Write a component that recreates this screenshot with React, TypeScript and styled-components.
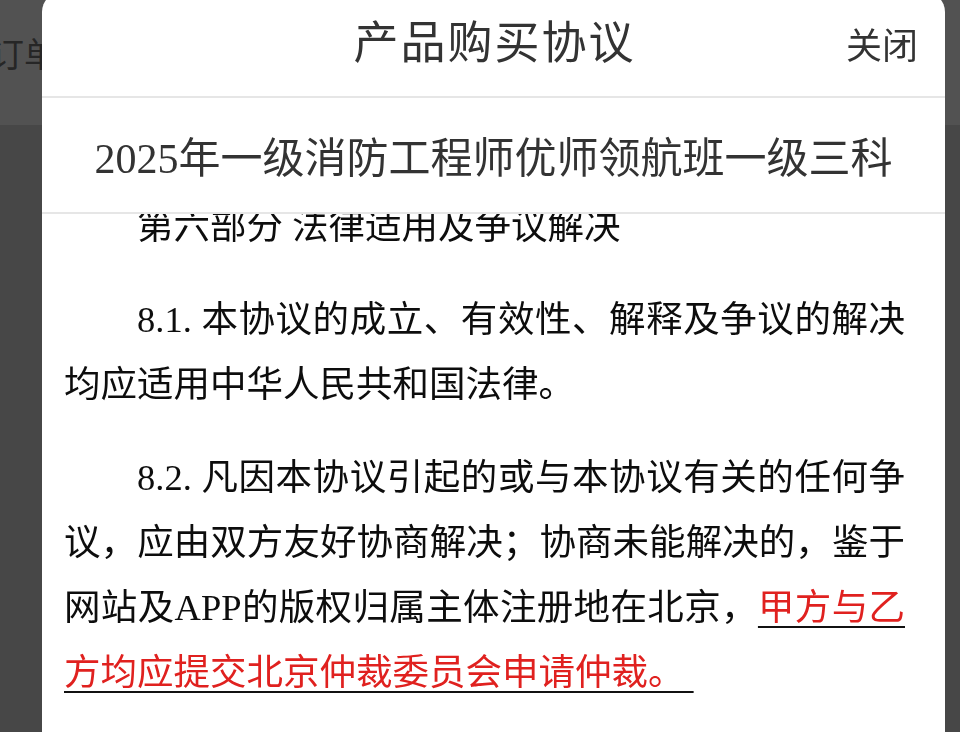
import React from "react";
import styled, { createGlobalStyle } from "styled-components";

const GlobalStyle = createGlobalStyle`
  html, body {
    margin: 0;
    padding: 0;
    height: 100%;
  }
  body {
    font-family: "Liberation Serif", "Noto Sans CJK SC", serif;
    background: #dedede;
    overflow: hidden;
  }
  #root {
    height: 100%;
  }
`;

const Page = styled.div`
  display: flex;
  flex-direction: column;
  height: 100%;
`;

const PageHeader = styled.header`
  height: 125px;
  background: #ffffff;
  display: flex;
  align-items: center;
  padding-bottom: 20px;
  box-sizing: border-box;
`;

const PageTitle = styled.h1`
  margin: 0 0 0 -10px;
  font-family: "Noto Sans CJK SC", sans-serif;
  font-weight: 400;
  font-size: 34px;
  color: #777777;
`;

const PageBody = styled.main`
  flex: 1;
  background: #dedede;
`;

const Overlay = styled.div`
  position: fixed;
  inset: 0;
  background: rgba(0, 0, 0, 0.68);
`;

const Sheet = styled.section`
  position: fixed;
  top: -8px;
  left: 42px;
  right: 15px;
  bottom: 0;
  background: #ffffff;
  border-radius: 20px 20px 0 0;
  display: flex;
  flex-direction: column;
  overflow: hidden;
`;

const SheetHeader = styled.div`
  height: 106px;
  box-sizing: border-box;
  display: grid;
  grid-template-columns: 1fr auto 1fr;
  align-items: center;
  padding: 0 27px 2px;
  border-bottom: 2px solid #e6e6e6;
`;

const SheetTitle = styled.h2`
  grid-column: 2;
  margin: 0 0 8px 2px;
  font-family: "Noto Sans CJK SC", sans-serif;
  font-weight: 400;
  font-size: 45px;
  letter-spacing: 2px;
  color: #333333;
`;

const CloseButton = styled.button`
  grid-column: 3;
  justify-self: end;
  border: 0;
  padding: 0;
  background: none;
  font-family: "Noto Sans CJK SC", sans-serif;
  font-size: 36px;
  color: #333333;
  cursor: pointer;
`;

const ProductName = styled.div`
  height: 116px;
  box-sizing: border-box;
  display: flex;
  align-items: center;
  justify-content: center;
  border-bottom: 2px solid #e6e6e6;
  font-size: 42px;
  color: #333333;
  padding-bottom: 2px;
`;

const Body = styled.div`
  flex: 1;
  overflow: hidden;
  padding: 0 40px 0 22px;
`;

const Article = styled.article`
  margin-top: -20px;
  font-size: 36.5px;
  line-height: 65px;
  color: #0d0d0d;
`;

const Clause = styled.div`
  margin-bottom: 28px;
`;

const Lines = styled.div<{ $indent?: boolean; $fill?: boolean }>`
  text-indent: ${({ $indent }) => ($indent ? "2em" : "0")};
  text-align: justify;
  text-align-last: ${({ $fill }) => ($fill ? "justify" : "left")};
`;

const Stressed = styled.span`
  color: #e0211f;
  text-decoration: underline;
  text-decoration-color: #111111;
  text-decoration-thickness: 2px;
  text-underline-offset: 6px;
`;

export default function App() {
  return (
    <>
      <GlobalStyle />
      <Page>
        <PageHeader>
          <PageTitle>订单详情</PageTitle>
        </PageHeader>
        <PageBody />
      </Page>
      <Overlay />
      <Sheet>
        <SheetHeader>
          <SheetTitle>产品购买协议</SheetTitle>
          <CloseButton type="button">关闭</CloseButton>
        </SheetHeader>
        <ProductName>2025年一级消防工程师优师领航班一级三科</ProductName>
        <Body>
          <Article>
            <Clause>
              <Lines $indent>第六部分 法律适用及争议解决</Lines>
            </Clause>
            <Clause>
              <Lines $indent>
                8.1. 本协议的成立、有效性、解释及争议的解决均应适用中华人民共和国法律。
              </Lines>
            </Clause>
            <Clause>
              <Lines $indent $fill>
                8.2. 凡因本协议引起的或与本协议有关的任何争议，应由双方友好协商解决；协商未能解决的，鉴于网站及APP的版权归属主体注册地在北京，
                <Stressed>甲方与乙</Stressed>
              </Lines>
              <Lines>
                <Stressed>方均应提交北京仲裁委员会申请仲裁。&nbsp;</Stressed>
              </Lines>
            </Clause>
          </Article>
        </Body>
      </Sheet>
    </>
  );
}
